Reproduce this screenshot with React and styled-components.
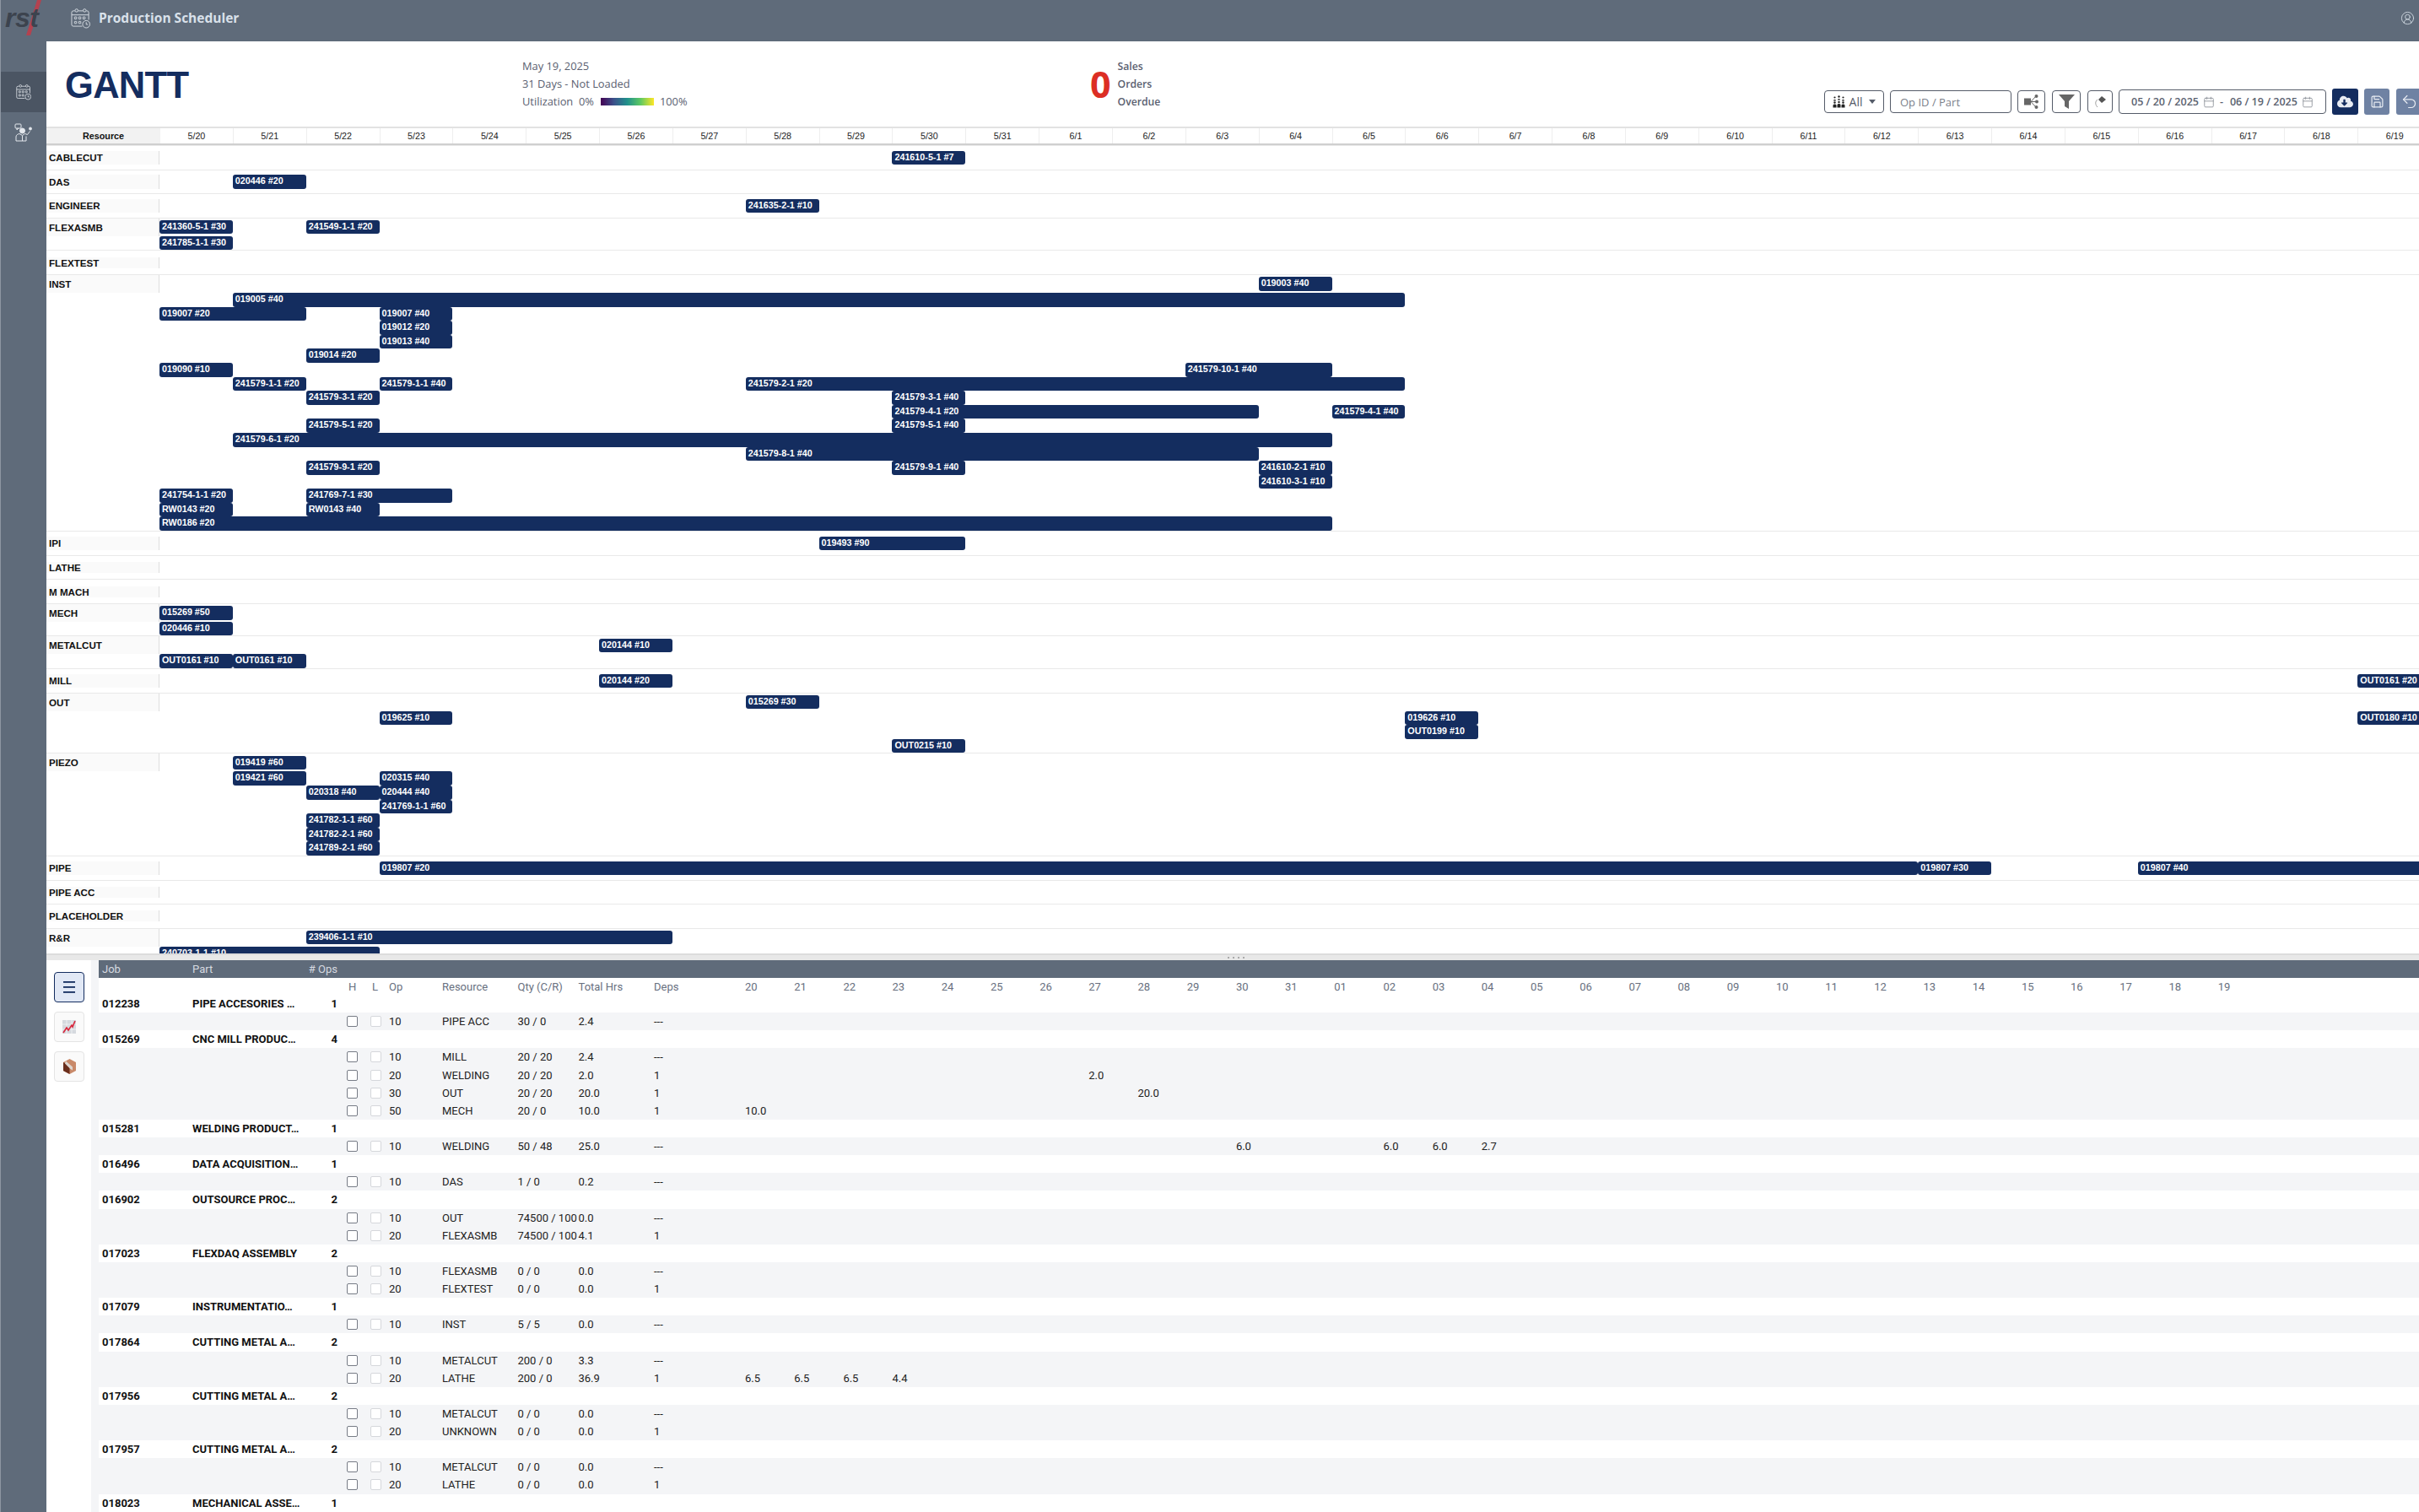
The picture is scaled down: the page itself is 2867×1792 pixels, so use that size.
// Production scheduler page: gantt chart on top, job table underneath
import React from 'react';
import styled, { createGlobalStyle } from 'styled-components';
import { FaCloudDownloadAlt } from 'react-icons/fa';
import { Calendar, CircleUserRound, Save, Undo2 } from 'lucide-react';

const NAVY = '#142d5f';
const SLATE = '#5f6b7a';

const GlobalStyle = createGlobalStyle`
  html, body { margin: 0; padding: 0; background: #fff; }
  body { font-family: 'Liberation Sans', Arial, sans-serif; }
  * { box-sizing: border-box; }
`;

const Shell = styled.div`
  width: 2867px;
  height: 1792px;
  overflow: hidden;
  display: flex;
  flex-direction: column;
`;

const TopBar = styled.header`
  height: 49px;
  flex: none;
  background: ${SLATE};
  border-left: 1px solid #8d96a2;
  display: flex;
  align-items: center;
  padding: 0 5px 7px 0;
`;

const LogoBox = styled.div`
  position: relative;
  width: 83px;
  height: 42px;
  flex: none;
`;

const LogoText = styled.span`
  position: absolute;
  left: 5px;
  top: 4px;
  font: italic 700 32px/34px 'Liberation Sans', Arial, sans-serif;
  letter-spacing: -0.5px;
  color: #3c434e;
`;

const TopTitle = styled.span`
  margin-left: 10px;
  font: 700 15.5px 'Open Sans', sans-serif;
  color: #d9e1ea;
`;

const UserButton = styled.span`
  margin-left: auto;
  display: flex;
  color: #d9e1ea;
`;

const Body = styled.div`
  flex: 1;
  min-height: 0;
  display: flex;
`;

const Sidebar = styled.nav`
  width: 55px;
  flex: none;
  background: ${SLATE};
  border-left: 1px solid #8d96a2;
  padding-top: 36px;
`;

const SideItem = styled.div`
  height: 48px;
  display: flex;
  align-items: center;
  justify-content: center;
  background: ${p => (p.$active ? '#4b5563' : 'transparent')};
`;

const Main = styled.main`
  flex: 1;
  min-width: 0;
  display: flex;
  flex-direction: column;
`;

const PageHeader = styled.section`
  height: 101px;
  flex: none;
  display: flex;
  padding: 19px 0 0 22px;
  position: relative;
`;

const PageTitle = styled.h1`
  width: 542px;
  margin: 11px 0 0;
  font: 700 43.5px/44px 'Liberation Sans', Arial, sans-serif;
  letter-spacing: -0.7px;
  color: ${NAVY};
`;

const InfoBlock = styled.div`
  width: 673px;
  font: 400 12.85px/21px 'Open Sans', sans-serif;
  color: #5a6070;
`;

const UtilRow = styled.div`
  display: flex;
  align-items: center;
`;

const UtilBar = styled.span`
  width: 63px;
  height: 9px;
  margin: 0 7px 0 8px;
  background: linear-gradient(90deg, #440154, #3b528b, #21918c, #5ec962, #fde725);
`;

const OverdueBlock = styled.div`
  display: flex;
  align-items: center;
  align-self: flex-start;
  gap: 8px;
`;

const OverdueCount = styled.span`
  font: 700 43px/63px 'Open Sans', sans-serif;
  color: #dc2e24;
`;

const OverdueLabel = styled.div`
  font: 600 12.2px/21px 'Open Sans', sans-serif;
  color: #5a6070;
`;

const Toolbar = styled.div`
  position: absolute;
  right: -3px;
  top: 56px;
  display: flex;
  align-items: center;
`;

const ToolBox = styled.div`
  height: 27px;
  width: ${p => p.$w}px;
  margin-right: ${p => p.$gap}px;
  border: 1px solid #555c69;
  border-radius: 4px;
  display: flex;
  align-items: center;
  justify-content: center;
  font: 400 13px 'Open Sans', sans-serif;
  color: #555c69;
`;

const OpInput = styled(ToolBox)`
  justify-content: flex-start;
  padding-left: 11px;
  color: #7b808a;
`;

const AllLabel = styled.span`
  margin: 0 8px 0 5px;
  font-size: 14px;
`;

const Caret = styled.span`
  width: 0;
  height: 0;
  border-left: 4px solid transparent;
  border-right: 4px solid transparent;
  border-top: 5px solid #555c69;
`;

const DateBox = styled.div`
  width: 246px;
  height: 29px;
  margin-right: 7px;
  border: 1px solid #555c69;
  border-radius: 4px;
  display: flex;
  align-items: center;
  padding-left: 14px;
  font: 600 12.5px 'Open Sans', sans-serif;
  color: #5b6270;
`;

const DateDash = styled.span`
  margin: 0 8px 0 6px;
`;

const DateIcon = styled.span`
  display: flex;
  margin-left: 5px;
  color: #8e929a;
`;

const ActionButton = styled.div`
  width: ${p => p.$w}px;
  height: 31px;
  margin-right: ${p => p.$gap}px;
  border-radius: 3px;
  background: ${p => (p.$primary ? NAVY : '#6f82a3')};
  color: #e8ecf3;
  display: flex;
  align-items: center;
  justify-content: center;
`;

const GanttArea = styled.section`
  height: 980px;
  flex: none;
  overflow: hidden;
`;

const GanttHead = styled.div`
  display: grid;
  grid-template-columns: 135px repeat(31, 86.85px);
  height: 22px;
  border-top: 2px solid #e2e2e2;
  border-bottom: 2px solid #cfcfcf;
`;

const HeadResource = styled.div`
  background: #f2f2f2;
  display: flex;
  align-items: center;
  justify-content: center;
  font-size: 10.8px;
  font-weight: 700;
  color: #111;
`;

const HeadDay = styled.div`
  display: flex;
  align-items: center;
  justify-content: center;
  border-right: 1px solid #eee;
  font-size: 10.7px;
  color: #222;
`;

const ResourceRow = styled.div`
  display: grid;
  grid-template-columns: 134px repeat(31, 86.85px);
  grid-template-rows: 21px repeat(${p => p.$extra}, 16.6px);
  align-content: center;
  min-height: 28.6px;
  border-top: 1px solid #e9e9e9;
  &:first-of-type { border-top-color: transparent; }
`;

const ResourceLabel = styled.div`
  grid-column: 1;
  grid-row: 1;
  background: #fafafa;
  border-right: 1px solid #ddd;
  padding-left: 3px;
  display: flex;
  align-items: center;
  font-size: 11.6px;
  font-weight: 700;
  color: #111;
`;

const Bar = styled.div`
  grid-column: ${p => p.$col + 2} / span ${p => p.$span};
  grid-row: ${p => p.$lane + 1};
  align-self: center;
  height: ${p => (p.$lane === 0 ? '16.4px' : '16.6px')};
  padding-left: 3px;
  border-radius: 3px;
  background: ${NAVY};
  color: #fff;
  font-size: 10.75px;
  font-weight: 700;
  line-height: 15px;
  white-space: nowrap;
  overflow: hidden;
`;

const Splitter = styled.div`
  height: 8px;
  flex: none;
  background: #e8e8e8;
  border-top: 2px solid #dcdcdc;
  display: flex;
  align-items: center;
  justify-content: center;
  gap: 4px;
  padding-left: 8px;
`;

const SplitDot = styled.span`
  width: 2px;
  height: 2px;
  background: #aaa;
`;

const Lower = styled.section`
  flex: 1;
  min-height: 0;
  display: flex;
  overflow: hidden;
`;

const ToolColumn = styled.div`
  width: 53px;
  flex: none;
  padding: 14px 0 0 9px;
  display: flex;
  flex-direction: column;
  gap: 11px;
`;

const ToolButton = styled.div`
  width: 36px;
  height: 36px;
  border-radius: 4px;
  border: ${p => (p.$active ? `1.5px solid ${NAVY}` : '1px solid #e4e4e4')};
  background: ${p => (p.$active ? '#e1e8f5' : '#fafafa')};
  display: flex;
  align-items: center;
  justify-content: center;
`;

const TableWrap = styled.div`
  flex: 1;
  min-width: 0;
  background: #f4f5f7;
  padding-left: 9px;
  font: 400 13px 'Roboto', sans-serif;
  color: #222;
`;

const cols = '107px 139px 41px 32px 22px 63px 89.5px 72px 89.5px 108px repeat(31, 58.2px)';

const TableHead = styled.div`
  display: grid;
  grid-template-columns: ${cols};
  height: 21px;
  background: ${SLATE};
  color: #d6dae0;
  align-items: center;
`;

const SubHead = styled.div`
  display: grid;
  grid-template-columns: ${cols};
  height: 20px;
  background: #fff;
  color: #687080;
  align-items: center;
`;

const JobRow = styled.div`
  display: grid;
  grid-template-columns: ${cols};
  height: 21.14px;
  background: #fff;
  color: #111;
  font-weight: 700;
  align-items: center;
`;

const OpRow = styled.div`
  display: grid;
  grid-template-columns: ${cols};
  height: 21.14px;
  align-items: center;
`;

const Cell = styled.span`
  padding-left: ${p => p.$pad ?? 3}px;
  white-space: nowrap;
`;

const OpsCell = styled.span`
  text-align: right;
  padding-right: 4px;
  white-space: nowrap;
`;

const CheckCell = styled.span`
  display: flex;
  padding-left: ${p => p.$pad}px;
`;

const CheckBox = styled.span`
  width: 13px;
  height: 13px;
  border-radius: 2px;
  background: #fff;
  border: 1px solid ${p => (p.$muted ? '#d5d7db' : '#777c86')};
`;

const days = ['20', '21', '22', '23', '24', '25', '26', '27', '28', '29', '30', '31', '01', '02', '03', '04', '05', '06', '07', '08', '09', '10', '11', '12', '13', '14', '15', '16', '17', '18', '19'];
const ganttDays = [
  ...Array.from({ length: 12 }, (_, i) => `5/${20 + i}`),
  ...Array.from({ length: 19 }, (_, i) => `6/${i + 1}`),
];

// [label, column, span, lane]
const resources = [
  { name: 'CABLECUT', bars: [['241610-5-1 #7', 10, 1, 0]] },
  { name: 'DAS', bars: [['020446 #20', 1, 1, 0]] },
  { name: 'ENGINEER', bars: [['241635-2-1 #10', 8, 1, 0]] },
  { name: 'FLEXASMB', bars: [['241360-5-1 #30', 0, 1, 0], ['241549-1-1 #20', 2, 1, 0], ['241785-1-1 #30', 0, 1, 1]] },
  { name: 'FLEXTEST', bars: [] },
  {
    name: 'INST',
    bars: [
      ['019003 #40', 15, 1, 0],
      ['019005 #40', 1, 16, 1],
      ['019007 #20', 0, 2, 2],
      ['019007 #40', 3, 1, 2],
      ['019012 #20', 3, 1, 3],
      ['019013 #40', 3, 1, 4],
      ['019014 #20', 2, 1, 5],
      ['019090 #10', 0, 1, 6],
      ['241579-10-1 #40', 14, 2, 6],
      ['241579-1-1 #20', 1, 1, 7],
      ['241579-1-1 #40', 3, 1, 7],
      ['241579-2-1 #20', 8, 9, 7],
      ['241579-3-1 #20', 2, 1, 8],
      ['241579-3-1 #40', 10, 1, 8],
      ['241579-4-1 #20', 10, 5, 9],
      ['241579-4-1 #40', 16, 1, 9],
      ['241579-5-1 #20', 2, 1, 10],
      ['241579-5-1 #40', 10, 1, 10],
      ['241579-6-1 #20', 1, 15, 11],
      ['241579-8-1 #40', 8, 7, 12],
      ['241579-9-1 #20', 2, 1, 13],
      ['241579-9-1 #40', 10, 1, 13],
      ['241610-2-1 #10', 15, 1, 13],
      ['241610-3-1 #10', 15, 1, 14],
      ['241754-1-1 #20', 0, 1, 15],
      ['241769-7-1 #30', 2, 2, 15],
      ['RW0143 #20', 0, 1, 16],
      ['RW0143 #40', 2, 1, 16],
      ['RW0186 #20', 0, 16, 17],
    ],
  },
  { name: 'IPI', bars: [['019493 #90', 9, 2, 0]] },
  { name: 'LATHE', bars: [] },
  { name: 'M MACH', bars: [] },
  { name: 'MECH', bars: [['015269 #50', 0, 1, 0], ['020446 #10', 0, 1, 1]] },
  { name: 'METALCUT', bars: [['020144 #10', 6, 1, 0], ['OUT0161 #10', 0, 1, 1], ['OUT0161 #10', 1, 1, 1]] },
  { name: 'MILL', bars: [['020144 #20', 6, 1, 0], ['OUT0161 #20', 30, 1, 0]] },
  {
    name: 'OUT',
    bars: [
      ['015269 #30', 8, 1, 0],
      ['019625 #10', 3, 1, 1],
      ['019626 #10', 17, 1, 1],
      ['OUT0180 #10', 30, 1, 1],
      ['OUT0199 #10', 17, 1, 2],
      ['OUT0215 #10', 10, 1, 3],
    ],
  },
  {
    name: 'PIEZO',
    bars: [
      ['019419 #60', 1, 1, 0],
      ['019421 #60', 1, 1, 1],
      ['020315 #40', 3, 1, 1],
      ['020318 #40', 2, 1, 2],
      ['020444 #40', 3, 1, 2],
      ['241769-1-1 #60', 3, 1, 3],
      ['241782-1-1 #60', 2, 1, 4],
      ['241782-2-1 #60', 2, 1, 5],
      ['241789-2-1 #60', 2, 1, 6],
    ],
  },
  { name: 'PIPE', bars: [['019807 #20', 3, 21, 0], ['019807 #30', 24, 1, 0], ['019807 #40', 27, 4, 0]] },
  { name: 'PIPE ACC', bars: [] },
  { name: 'PLACEHOLDER', bars: [] },
  { name: 'R&R', bars: [['239406-1-1 #10', 2, 5, 0], ['240703-1-1 #10', 0, 3, 1]] },
];

// op: [op, resource, qty, hours, deps, { dayIndex: value }]
const jobs = [
  { job: '012238', part: 'PIPE ACCESORIES …', ops: [['10', 'PIPE ACC', '30 / 0', '2.4', '---']] },
  {
    job: '015269',
    part: 'CNC MILL PRODUC…',
    ops: [
      ['10', 'MILL', '20 / 20', '2.4', '---'],
      ['20', 'WELDING', '20 / 20', '2.0', '1', { 7: '2.0' }],
      ['30', 'OUT', '20 / 20', '20.0', '1', { 8: '20.0' }],
      ['50', 'MECH', '20 / 0', '10.0', '1', { 0: '10.0' }],
    ],
  },
  {
    job: '015281',
    part: 'WELDING PRODUCT…',
    ops: [['10', 'WELDING', '50 / 48', '25.0', '---', { 10: '6.0', 13: '6.0', 14: '6.0', 15: '2.7' }]],
  },
  { job: '016496', part: 'DATA ACQUISITION…', ops: [['10', 'DAS', '1 / 0', '0.2', '---']] },
  {
    job: '016902',
    part: 'OUTSOURCE PROC…',
    ops: [
      ['10', 'OUT', '74500 / 100', '0.0', '---'],
      ['20', 'FLEXASMB', '74500 / 100', '4.1', '1'],
    ],
  },
  {
    job: '017023',
    part: 'FLEXDAQ ASSEMBLY',
    ops: [
      ['10', 'FLEXASMB', '0 / 0', '0.0', '---'],
      ['20', 'FLEXTEST', '0 / 0', '0.0', '1'],
    ],
  },
  { job: '017079', part: 'INSTRUMENTATIO…', ops: [['10', 'INST', '5 / 5', '0.0', '---']] },
  {
    job: '017864',
    part: 'CUTTING METAL A…',
    ops: [
      ['10', 'METALCUT', '200 / 0', '3.3', '---'],
      ['20', 'LATHE', '200 / 0', '36.9', '1', { 0: '6.5', 1: '6.5', 2: '6.5', 3: '4.4' }],
    ],
  },
  {
    job: '017956',
    part: 'CUTTING METAL A…',
    ops: [
      ['10', 'METALCUT', '0 / 0', '0.0', '---'],
      ['20', 'UNKNOWN', '0 / 0', '0.0', '1'],
    ],
  },
  {
    job: '017957',
    part: 'CUTTING METAL A…',
    ops: [
      ['10', 'METALCUT', '0 / 0', '0.0', '---'],
      ['20', 'LATHE', '0 / 0', '0.0', '1'],
    ],
  },
  { job: '018023', part: 'MECHANICAL ASSE…', ops: [] },
];

const CalendarClockIcon = ({ width, height, color }) => (
  <svg width={width} height={height} viewBox="0 0 24 26" fill="none" stroke={color} strokeWidth="1">
    <path d="M5 4H3a2 2 0 0 0-2 2v15a2 2 0 0 0 2 2h11M9 4h6M19 4h1a2 2 0 0 1 2 2v9" />
    <path d="M1 9h21" />
    <circle cx="7" cy="3.5" r="1.8" />
    <circle cx="17" cy="3.5" r="1.8" />
    <rect x="4.5" y="11.5" width="2.6" height="2.6" rx=".4" />
    <rect x="9.7" y="11.5" width="2.6" height="2.6" rx=".4" />
    <rect x="15" y="11.5" width="2.6" height="2.6" rx=".4" />
    <rect x="4.5" y="17" width="2.6" height="2.6" rx=".4" />
    <rect x="9.7" y="17" width="2.6" height="2.6" rx=".4" />
    <circle cx="19" cy="20.5" r="4.5" />
    <path d="M19 18v2.8h2.2" />
  </svg>
);

const PlannerIcon = () => (
  <svg width="22" height="22" viewBox="0 0 22 22" fill="none" stroke="#e4e8ed" strokeWidth="1">
    <rect x="1" y="1" width="7" height="5" rx="1" />
    <path d="M3 6v2l2-2" />
    <circle cx="9.5" cy="9" r="3" fill="#e4e8ed" />
    <path d="M2 21v-5c0-2 2-3 4-3.500l3.500 2 3-2 3 1 3-4" />
    <path d="M9.500 15v6M2 21h12v-5.500" />
    <circle cx="19" cy="6.500" r="1.500" fill="#e4e8ed" />
  </svg>
);

const GroupIcon = () => (
  <svg width="15" height="15" viewBox="0 0 15 15" fill="#222">
    <circle cx="2.500" cy="2.500" r="1.100" />
    <circle cx="7.500" cy="1.500" r="1.200" />
    <circle cx="12.500" cy="2.500" r="1.100" />
    <path d="M1 6.500c0-2 3-2 3 0zM6 5.500c0-2 3-2 3 0zM11 6.500c0-2 3-2 3 0z" />
    <circle cx="2.500" cy="8.500" r="1.200" />
    <circle cx="7.500" cy="8" r="1.200" />
    <circle cx="12.500" cy="8.500" r="1.200" />
    <path d="M.5 14.500v-2.500c0-2 4-2 4 0v2.500zM5.500 14.500v-3c0-2 4-2 4 0v3zM10.500 14.500v-2.500c0-2 4-2 4 0v2.500z" />
  </svg>
);

const BranchIcon = () => (
  <svg width="17" height="17" viewBox="0 0 17 17" fill="#666">
    <rect x="0" y="4.500" width="8" height="8" />
    <path d="M8 8.500L14 2M8 8.500h6M8 8.500l6 6.500" stroke="#666" strokeWidth="1" />
    <circle cx="14.500" cy="2" r="2" />
    <circle cx="15" cy="8.500" r="2" />
    <circle cx="14.500" cy="15" r="2" />
  </svg>
);

const FunnelIcon = () => (
  <svg width="19" height="17" viewBox="0 0 19 17" fill="#666">
    <path d="M0 0h19l-7 8v9l-5-3V8z" />
  </svg>
);

const EraserIcon = () => (
  <svg width="13" height="13" viewBox="0 0 13 13" fill="none">
    <path d="M8 0l5 4-5 4-4-4z" fill="#555" />
    <path d="M3 4C0 6 0 10 3 13" stroke="#888" strokeWidth=".8" />
  </svg>
);

const MenuIcon = () => (
  <svg width="14" height="16" viewBox="0 0 14 16" fill={NAVY}>
    <rect y="1" width="14" height="1.800" />
    <rect y="7" width="14" height="1.800" />
    <rect y="13" width="14" height="1.800" />
  </svg>
);

const TrendIcon = () => (
  <svg width="16" height="16" viewBox="0 0 16 16" fill="none">
    <rect width="16" height="16" fill="#d5d9de" />
    <path d="M5 0v16M11 0v16M0 5h16M0 11h16" stroke="#f4f5f7" strokeWidth=".8" />
    <path d="M1 15l4-6 2 3 4-6 1 2 3-7" stroke="#d8263c" strokeWidth="1.600" />
  </svg>
);

const BoxIcon = () => (
  <svg width="15" height="18" viewBox="0 0 15 18">
    <path d="M7.500 0L15 4v10l-7.500 4L0 14V4z" fill="#c98a6a" />
    <path d="M0 4l7.500 4v10L0 14z" fill="#6a2e1c" />
    <path d="M3 2.500l8 7v4l-3-2-6-6z" fill="#ddd6d0" />
  </svg>
);

const Checks = () => (
  <>
    <CheckCell $pad={7}><CheckBox /></CheckCell>
    <CheckCell $pad={3}><CheckBox $muted /></CheckCell>
  </>
);

function GanttChart() {
  return (
    <GanttArea>
      <GanttHead>
        <HeadResource>Resource</HeadResource>
        {ganttDays.map(d => <HeadDay key={d}>{d}</HeadDay>)}
      </GanttHead>
      {resources.map(r => {
        const extra = r.bars.reduce((max, b) => Math.max(max, b[3]), 0);
        return (
          <ResourceRow key={r.name} $extra={extra}>
            <ResourceLabel>{r.name}</ResourceLabel>
            {r.bars.map(([label, col, span, lane]) => (
              <Bar key={`${label}-${col}-${lane}`} $col={col} $span={span} $lane={lane}>{label}</Bar>
            ))}
          </ResourceRow>
        );
      })}
    </GanttArea>
  );
}

function JobTable() {
  return (
    <TableWrap>
      <TableHead>
        <Cell $pad={4}>Job</Cell>
        <Cell $pad={4}>Part</Cell>
        <OpsCell># Ops</OpsCell>
      </TableHead>
      <SubHead>
        <span /><span /><span />
        <Cell $pad={9}>H</Cell>
        <Cell $pad={5}>L</Cell>
        <Cell>Op</Cell>
        <Cell>Resource</Cell>
        <Cell>Qty (C/R)</Cell>
        <Cell>Total Hrs</Cell>
        <Cell>Deps</Cell>
        {days.map(d => <Cell key={d}>{d}</Cell>)}
      </SubHead>
      {jobs.map(j => (
        <React.Fragment key={j.job}>
          <JobRow>
            <Cell $pad={4}>{j.job}</Cell>
            <Cell $pad={4}>{j.part}</Cell>
            <OpsCell>{j.ops.length || 1}</OpsCell>
          </JobRow>
          {j.ops.map(([op, res, qty, hrs, deps, load]) => (
            <OpRow key={op}>
              <span /><span /><span />
              <Checks />
              <Cell>{op}</Cell>
              <Cell>{res}</Cell>
              <Cell>{qty}</Cell>
              <Cell>{hrs}</Cell>
              <Cell>{deps}</Cell>
              {days.map((d, i) => <Cell key={d}>{load?.[i]}</Cell>)}
            </OpRow>
          ))}
        </React.Fragment>
      ))}
    </TableWrap>
  );
}

export default function App() {
  return (
    <>
      <GlobalStyle />
      <Shell>
        <TopBar>
          <LogoBox>
            <svg width="83" height="42" viewBox="0 0 83 42">
              <path d="M43 0h5L35 42h-5z" fill="#b4424f" />
            </svg>
            <LogoText>rst</LogoText>
          </LogoBox>
          <CalendarClockIcon width={23} height={25} color="#d5dbe2" />
          <TopTitle>Production Scheduler</TopTitle>
          <UserButton><CircleUserRound size={17} strokeWidth={1.2} /></UserButton>
        </TopBar>
        <Body>
          <Sidebar>
            <SideItem $active><CalendarClockIcon width={18} height={20} color="#e4e8ed" /></SideItem>
            <SideItem><PlannerIcon /></SideItem>
          </Sidebar>
          <Main>
            <PageHeader>
              <PageTitle>GANTT</PageTitle>
              <InfoBlock>
                <div>May 19, 2025</div>
                <div>31 Days - Not Loaded</div>
                <UtilRow>Utilization&nbsp; 0%<UtilBar />100%</UtilRow>
              </InfoBlock>
              <OverdueBlock>
                <OverdueCount>0</OverdueCount>
                <OverdueLabel>
                  <div>Sales</div>
                  <div>Orders</div>
                  <div>Overdue</div>
                </OverdueLabel>
              </OverdueBlock>
              <Toolbar>
                <ToolBox $w={71} $gap={7}>
                  <GroupIcon />
                  <AllLabel>All</AllLabel>
                  <Caret />
                </ToolBox>
                <OpInput $w={144} $gap={7}>Op ID / Part</OpInput>
                <ToolBox $w={33} $gap={8}><BranchIcon /></ToolBox>
                <ToolBox $w={34} $gap={8}><FunnelIcon /></ToolBox>
                <ToolBox $w={30} $gap={7}><EraserIcon /></ToolBox>
                <DateBox>
                  05 / 20 / 2025
                  <DateIcon><Calendar size={14} strokeWidth={1.5} /></DateIcon>
                  <DateDash>-</DateDash>
                  06 / 19 / 2025
                  <DateIcon><Calendar size={14} strokeWidth={1.5} /></DateIcon>
                </DateBox>
                <ActionButton $primary $w={31} $gap={7}><FaCloudDownloadAlt size={19} /></ActionButton>
                <ActionButton $w={30} $gap={8}><Save size={17} strokeWidth={1.7} /></ActionButton>
                <ActionButton $w={30} $gap={0}><Undo2 size={21} strokeWidth={1.4} /></ActionButton>
              </Toolbar>
            </PageHeader>
            <GanttChart />
            <Splitter>
              <SplitDot /><SplitDot /><SplitDot /><SplitDot />
            </Splitter>
            <Lower>
              <ToolColumn>
                <ToolButton $active><MenuIcon /></ToolButton>
                <ToolButton><TrendIcon /></ToolButton>
                <ToolButton><BoxIcon /></ToolButton>
              </ToolColumn>
              <JobTable />
            </Lower>
          </Main>
        </Body>
      </Shell>
    </>
  );
}
